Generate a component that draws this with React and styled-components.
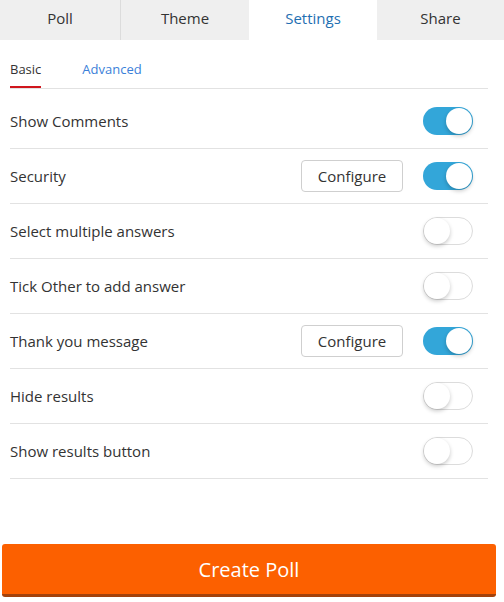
import React, { useState } from "react";
import styled, { createGlobalStyle } from "styled-components";

const Global = createGlobalStyle`
  html, body { margin: 0; padding: 0; background: #fff; }
  body { font-family: "Open Sans", "Noto Sans", sans-serif; color: #333; }
  * { box-sizing: border-box; }
`;

const Page = styled.div`
  width: 504px;
  height: 602px;
  display: flex;
  flex-direction: column;
`;

const TabBar = styled.div`
  display: grid;
  grid-template-columns: 120px 129px 128px 1fr;
  height: 40px;
  background: #efefef;
`;

const Tab = styled.div`
  display: flex;
  align-items: center;
  justify-content: center;
  padding-bottom: 4px;
  font-size: 15px;
  color: ${(p) => (p.$active ? "#1f6fb2" : "#333")};
  background: ${(p) => (p.$active ? "#fff" : "#efefef")};
  border-left: ${(p) => (p.$first || p.$active || p.$afterActive ? "none" : "1px solid #dcdcdc")};
`;

const Body = styled.div`
  padding: 0 16px 0 10px;
  flex: 1;
`;

const SubTabs = styled.div`
  display: flex;
  gap: 41px;
  height: 49px;
  border-bottom: 1px solid #e2e2e2;
  padding-top: 20px;
`;

const SubTab = styled.div`
  font-size: 13px;
  color: ${(p) => (p.$active ? "#333" : "#3b7fd9")};
  position: relative;
  height: 28px;
  &::after {
    content: "";
    display: ${(p) => (p.$active ? "block" : "none")};
    position: absolute;
    left: 0;
    right: 0;
    bottom: 0;
    height: 2px;
    background: #d0161d;
  }
`;

const List = styled.div`
  padding-top: 5px;
`;

const Row = styled.div`
  display: flex;
  align-items: center;
  height: 55px;
  border-bottom: 1px solid #e2e2e2;
  padding-right: 15px;
`;

const Label = styled.div`
  flex: 1;
  font-size: 15px;
  color: #333;
`;

const ConfigButton = styled.button`
  font-family: inherit;
  width: 102px;
  height: 32px;
  border: 1px solid #cfcfcf;
  border-radius: 4px;
  background: #fff;
  color: #333;
  font-size: 15px;
  margin-right: 20px;
  padding: 0;
`;

const Switch = styled.div`
  width: 50px;
  height: 28px;
  border-radius: 14px;
  background: ${(p) => (p.$on ? "#33a6d9" : "#fff")};
  border: ${(p) => (p.$on ? "none" : "1px solid #dcdcdc")};
  position: relative;
  cursor: pointer;
`;

const Knob = styled.div`
  position: absolute;
  top: ${(p) => (p.$on ? "1px" : "0px")};
  left: ${(p) => (p.$on ? "23px" : "0px")};
  width: 26px;
  height: 26px;
  border-radius: 50%;
  background: #fff;
  box-shadow: 0 2px 4px rgba(0, 0, 0, 0.22);
`;

const Footer = styled.div`
  padding: 0 8px 5px 2px;
`;

const CreateButton = styled.button`
  font-family: inherit;
  width: 494px;
  height: 53px;
  border: none;
  border-bottom: 3px solid #a3420c;
  border-radius: 3px;
  background: #fc6000;
  color: #fff;
  font-size: 20px;
  padding: 0;
`;

const rows = [
  { label: "Show Comments", on: true },
  { label: "Security", on: true, config: true },
  { label: "Select multiple answers", on: false },
  { label: "Tick Other to add answer", on: false },
  { label: "Thank you message", on: true, config: true },
  { label: "Hide results", on: false },
  { label: "Show results button", on: false },
];

export default function App() {
  const [state, setState] = useState(rows.map((r) => r.on));
  const tabs = ["Poll", "Theme", "Settings", "Share"];
  return (
    <Page>
      <Global />
      <TabBar>
        {tabs.map((t, i) => (
          <Tab key={t} $active={i === 2} $first={i === 0} $afterActive={i === 3}>
            {t}
          </Tab>
        ))}
      </TabBar>
      <Body>
        <SubTabs>
          <SubTab $active>Basic</SubTab>
          <SubTab>Advanced</SubTab>
        </SubTabs>
        <List>
          {rows.map((r, i) => (
            <Row key={r.label}>
              <Label>{r.label}</Label>
              {r.config && <ConfigButton>Configure</ConfigButton>}
              <Switch
                $on={state[i]}
                onClick={() => setState((s) => s.map((v, j) => (j === i ? !v : v)))}
              >
                <Knob $on={state[i]} />
              </Switch>
            </Row>
          ))}
        </List>
      </Body>
      <Footer>
        <CreateButton>Create Poll</CreateButton>
      </Footer>
    </Page>
  );
}
